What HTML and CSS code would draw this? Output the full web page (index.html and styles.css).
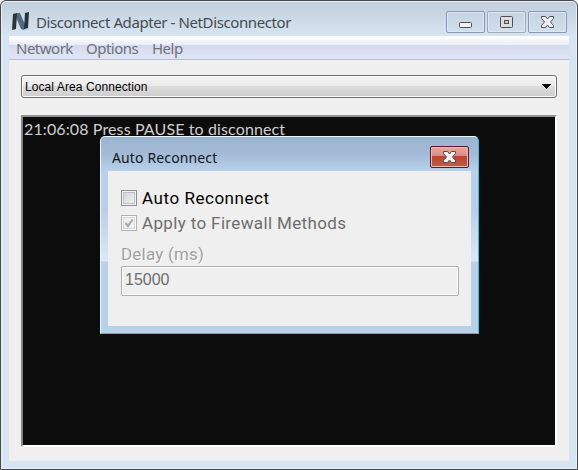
FILE: index.html
```html
<!DOCTYPE html>
<html lang="en">
<head>
<meta charset="utf-8">
<title>Disconnect Adapter - NetDisconnector</title>
<link rel="stylesheet" href="styles.css">
</head>
<body>
<main class="window">
  <header class="titlebar">
    <svg class="logo" width="18" height="20" viewBox="0 0 18 20">
      <path d="M1 2L6 1L17 17L12 18Z" fill="#a9cbe6"/>
      <path d="M5 1H8L14 15L12 18L9 17L3 3Z" fill="#526b7e"/>
      <path d="M1 2L5 1L4 17L0 18Z M13 1L17 0L16 16L12 17Z" fill="#26323c"/>
    </svg>
    <h1 class="title"><span>Disconnect Adapter - NetDisconnector</span></h1>
    <div class="controls">
      <button class="control" aria-label="Minimize"><svg width="37" height="20"><rect x="12.5" y="10.5" width="12" height="5" rx="1" fill="#f2f2f2" stroke="#4d5063"/></svg></button>
      <button class="control light" aria-label="Maximize"><svg width="37" height="20"><rect x="12.5" y="4.500" width="12" height="11" rx="1" fill="#deddda" stroke="#4d5063"/><rect x="16.500" y="8.500" width="4" height="3" fill="#b9d1e6" stroke="#4d5063"/></svg></button>
      <button class="control" aria-label="Close"><svg width="37" height="20"><path d="M12.500 4.500H16.500L18.500 7L20.500 4.500H24.500V6.500L21.500 10L24.500 13.500V15.500H20.500L18.500 13L16.500 15.500H12.500V13.500L15.500 10L12.500 6.500Z" fill="#f0f0f0" stroke="#4d5063" stroke-linejoin="round"/></svg></button>
    </div>
  </header>
  <section class="client">
    <nav class="menu"><span class="m1">Network</span><span class="m2">Options</span><span class="m3">Help</span></nav>
    <div class="body">
      <div class="combo"><span>Local Area Connection</span><svg width="9" height="5" shape-rendering="crispEdges"><path d="M0 0H9V1H8V2H7V3H6V4H5V5H4V4H3V3H2V2H1V1H0Z"/></svg></div>
      <div class="console"><span>21:06:08 Press PAUSE to disconnect</span></div>
    </div>
  </section>
  <section class="dialog" role="dialog">
    <header class="dialog-title"><span>Auto Reconnect</span>
      <button class="close" aria-label="Close"><svg width="37" height="20"><path d="M12.500 4.500H16.500L18.500 7L20.500 4.500H24.500V6.500L21.500 10L24.500 13.500V15.500H20.500L18.500 13L16.500 15.500H12.500V13.500L15.500 10L12.500 6.500Z" fill="#f0f0f0" stroke="#584a55" stroke-linejoin="round"/></svg></button>
    </header>
    <div class="dialog-body">
      <div class="option"><i class="check"></i><span class="o1">Auto Reconnect</span></div>
      <div class="option disabled"><i class="check"><svg width="12" height="12"><path d="M2.500 6L5 9L9.500 2.500" fill="none" stroke="#a4a7ab" stroke-width="2"/></svg></i><span class="o2">Apply to Firewall Methods</span></div>
      <div class="delay">Delay (ms)</div>
      <div class="field">15000</div>
    </div>
  </section>
</main>
</body>
</html>
```
FILE: styles.css
```css
* { box-sizing: border-box; }
body { margin: 0; background: #fff; }
svg { display: block; }
button { padding: 0; font: inherit; }
.window {
  position: relative;
  width: 578px;
  height: 470px;
  padding: 0 8px 8px;
  border: 1px solid #494649;
  border-radius: 6px 6px 0 0;
  background: linear-gradient(#c1cedb, #d7e4f1 35px);
  box-shadow: inset 0 0 0 1px #e7eff7;
}
.titlebar { display: flex; height: 35px; padding: 10px 2px 0 3px; }
.logo { margin-top: 1px; }
.title { margin: 0 0 0 6px; flex: 1; font: 15px/23px "Noto Sans", sans-serif; letter-spacing: -.4px; color: #454b53; white-space: nowrap; }
.controls { display: flex; gap: 2px; }
.control {
  width: 39px;
  height: 22px;
  border: 1px solid #8797b5;
  border-radius: 2px;
  background: linear-gradient(#c5d3e2, #d2dfed);
  box-shadow: inset 0 0 0 1px #dce7f3;
}
.control.light { border-color: #a0abb9; }
.client { width: 560px; height: 425px; background: #efefef; }
.menu {
  display: flex;
  height: 24px;
  padding-left: 7px;
  border-bottom: 1px solid #b6bcd2;
  background: linear-gradient(#fff 0, #e8edf5 9px, #d4daed 9px, #e1e5f5 23px);
  font: 15px/25px "Noto Sans", sans-serif;
  letter-spacing: -.5px;
  color: #707278;
}
.m1, .m2 { width: 70px; }
.m2 { width: 66px; }
.body { padding: 15px 12px; }
.combo {
  display: flex;
  align-items: center;
  justify-content: space-between;
  width: 536px;
  height: 23px;
  padding: 0 5px 0 3px;
  border: 1px solid #707070;
  border-radius: 3px;
  background: linear-gradient(#f2f2f2, #ebebeb 50%, #dcdcdc 50%, #cecece);
  box-shadow: inset 0 0 0 1px #fafafa;
  font: 12px/21px "Liberation Sans", sans-serif;
  letter-spacing: .08px;
  color: #000;
}
.combo span { padding-top: 1px; }
.console {
  width: 536px;
  height: 332px;
  margin-top: 17px;
  padding-left: 1px;
  border: solid;
  border-width: 2px;
  border-color: #929292 #fff #fff #858585;
  background: #0c0c0c;
  font: 16px/24px Lato, sans-serif;
  letter-spacing: .12px;
  color: #cfcfcf;
}
.dialog {
  position: absolute;
  left: 99px;
  top: 135px;
  width: 379px;
  height: 198px;
  padding: 0 7px 7px;
  border: 1px solid #37bdd7;
  border-top-color: #f1f5fa;
  border-left-color: #eef4fa;
  border-radius: 5px 5px 0 0;
  background: linear-gradient(#9bb4d1 0, #a3bbd6 17px, #b9d0ea 34px, #bad0ea 75px, #dce8f5 124px, #b9d0e9 125px);
}
.dialog-title { display: flex; justify-content: space-between; height: 34px; padding: 9px 2px 0 4px; font: 14px/24px "Noto Sans", sans-serif; letter-spacing: .13px; color: #10151b; }
.close {
  width: 39px;
  height: 22px;
  border: 1px solid #571c2b;
  border-radius: 2px;
  background: linear-gradient(#e9aaa0, #dc8a7f 45%, #b9432f 45%, #c75c47);
  box-shadow: inset 0 0 0 1px #ecb8b0;
}
.dialog-body { width: 363px; height: 155px; padding: 15px 13px 0; background: #efefef; font-family: Roboto, sans-serif; font-size: 17px; }
.option { display: flex; height: 25px; line-height: 24px; color: #000; }
.disabled { color: #6d6d6d; }
.o1 { letter-spacing: .54px; }
.o2 { letter-spacing: .36px; }
.check { width: 16px; height: 16px; margin: 4px 5px 0 0; border: 1px solid #8e8f8f; background: linear-gradient(135deg, #ccd0d5, #f6f6f6); box-shadow: inset 0 0 0 1px #f4f4f4, inset 0 0 0 2px #b9bec4; }
.check svg { margin: 1px; }
.disabled .check { border-color: #b1b1b1; background: #f0f0f0; box-shadow: inset 0 0 0 1px #fafafa, inset 0 0 0 2px #d5d8db; }
.delay { height: 30px; padding-top: 6px; line-height: 24px; letter-spacing: .2px; color: #a0a0a0; text-shadow: 1px 1px #fff; }
.field { width: 338px; height: 30px; padding-left: 3px; border: 1px solid #afafaf; border-radius: 2px; box-shadow: inset 0 0 0 1px #fff; font: 16px/26px "Liberation Sans", sans-serif; color: #6d6d6d; }
```
